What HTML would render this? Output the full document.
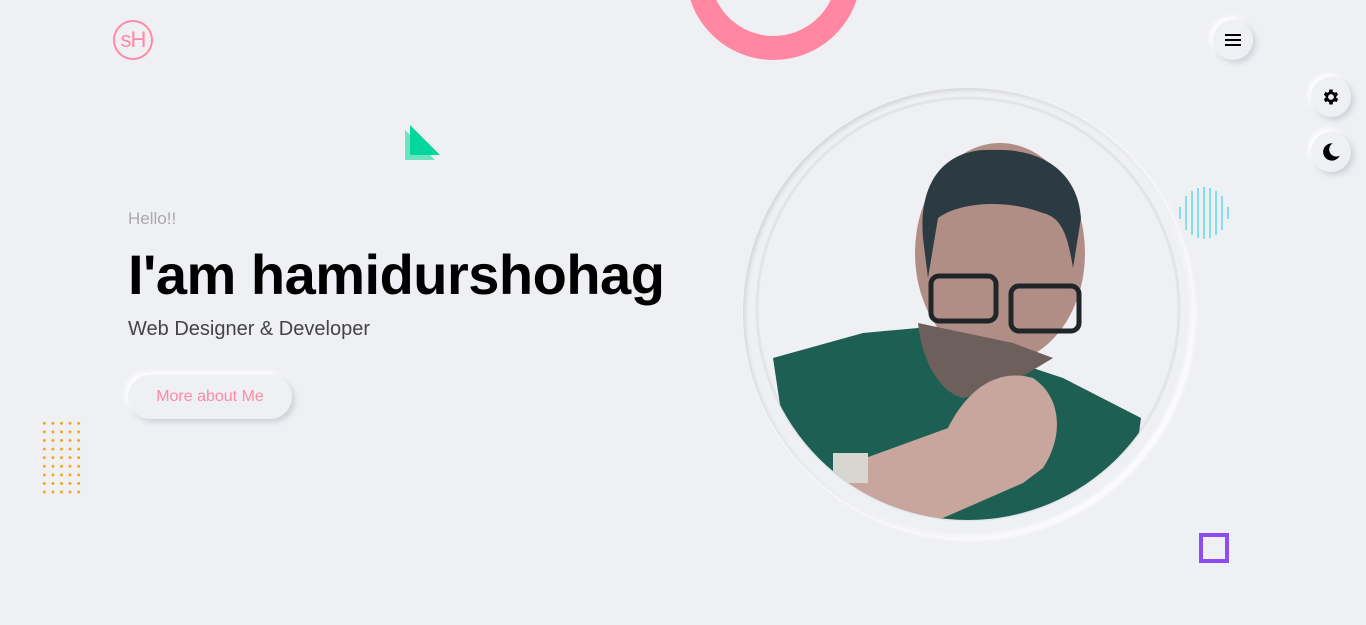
<!DOCTYPE html>
<html><head><meta charset="utf-8"><style>
*{margin:0;padding:0;box-sizing:border-box}
body{width:1366px;height:625px;overflow:hidden;background:#eff0f4;font-family:"Liberation Sans",sans-serif;position:relative}
.abs{position:absolute}
.logo{left:113px;top:20px;width:40px;height:40px;border:2px solid #ff8aa5;border-radius:50%;color:#ff8aa5;font-size:22px;text-align:center;line-height:36px;letter-spacing:-1px}
.btn{border-radius:50%;background:#eff0f4;box-shadow:3px 3px 6px #d0d2d8,-3px -3px 6px #fff;width:40px;height:40px;display:flex;align-items:center;justify-content:center}
.hello{left:128px;top:209px;color:#aaa;font-size:17px}
h1{left:128px;top:242px;font-size:56px;font-weight:bold;color:#000;letter-spacing:-0.5px}
.sub{left:128px;top:318px;font-size:20px;color:#444}
.more{left:128px;top:375px;width:164px;height:44px;border-radius:22px;background:#eff0f4;box-shadow:3px 3px 6px #cfd1d7,-3px -3px 6px #fff;color:#ff8aa5;font-size:16px;text-align:center;line-height:44px}
</style></head><body>
<div class="abs logo">sH</div>
<div class="abs" style="left:686px;top:-115px;width:175px;height:175px;border:24px solid #ff87a1;border-radius:50%"></div>
<svg class="abs" style="left:405px;top:125px" width="36" height="36"><polygon points="0,5 0,35 30,35" fill="#6de3bf"/><polygon points="5,0 5,30 35,30" fill="#05d69b"/></svg>
<div class="abs btn" style="left:1213px;top:20px"><svg width="18" height="16"><rect x="1" y="2" width="16" height="2" fill="#000"/><rect x="1" y="7" width="16" height="2" fill="#000"/><rect x="1" y="12" width="16" height="2" fill="#000"/></svg></div>
<div class="abs btn" style="left:1311px;top:77px"><svg width="20" height="20" viewBox="0 0 24 24"><path fill="#000" fill-rule="evenodd" d="M19.4 13a7.5 7.5 0 000-2l2.1-1.6-2-3.5-2.5 1a7.6 7.6 0 00-1.7-1L15 3h-4l-.4 2.9a7.6 7.6 0 00-1.7 1l-2.5-1-2 3.5L6.5 11a7.5 7.5 0 000 2l-2.1 1.6 2 3.5 2.5-1a7.6 7.6 0 001.7 1L11 21h4l.4-2.9a7.6 7.6 0 001.7-1l2.5 1 2-3.5zM13 15.5a3.5 3.5 0 110-7 3.5 3.5 0 010 7z" transform="translate(-1 0)"/></svg></div>
<div class="abs btn" style="left:1311px;top:132px"><svg width="22" height="22" viewBox="0 0 24 24"><path fill="#000" d="M14 2.5A9.5 9.5 0 1021.5 16 7.5 7.5 0 0114 2.5z"/></svg></div>
<svg class="abs" style="left:1178px;top:187px" width="54" height="52"><g stroke="#3cd2e6" stroke-width="1.2">
<line x1="2" y1="20" x2="2" y2="32"/><line x1="8" y1="9" x2="8" y2="43"/><line x1="14" y1="4" x2="14" y2="48"/><line x1="20" y1="1" x2="20" y2="51"/><line x1="26" y1="0" x2="26" y2="52"/><line x1="32" y1="1" x2="32" y2="51"/><line x1="38" y1="4" x2="38" y2="48"/><line x1="44" y1="9" x2="44" y2="43"/><line x1="50" y1="20" x2="50" y2="32"/></g></svg>
<div class="abs" style="left:42px;top:421px;width:40px;height:74px;background-image:radial-gradient(circle,#f7a21b 1.3px,transparent 1.7px);background-size:8.6px 8.6px;background-position:-2px -2px"></div>
<div class="abs" style="left:1199px;top:533px;width:30px;height:30px;border:4px solid #8d4cf6"></div>
<div class="abs hello">Hello!!</div>
<h1 class="abs">I'am hamidurshohag</h1>
<div class="abs sub">Web Designer &amp; Developer</div>
<div class="abs more">More about Me</div>
<div class="abs" style="left:743px;top:88px;width:450px;height:450px;border-radius:50%;box-shadow:inset 2px 2px 4px #d2d3d8,inset -2px -2px 4px #fff,2px 2px 5px #fff"></div>
<svg class="abs" style="left:743px;top:88px" width="450" height="450">
<defs><clipPath id="c"><circle cx="225" cy="221" r="211"/></clipPath></defs>
<circle cx="225" cy="221" r="211" fill="#eef0f4" stroke="#e3e4e8" stroke-width="3"/>
<g clip-path="url(#c)">
<path d="M30 270 L120 245 L175 240 L260 270 L320 290 L398 330 L380 470 L60 470 Z" fill="#1e5f54"/>
<ellipse cx="257" cy="165" rx="85" ry="110" fill="#b08e86"/>
<path d="M180 150 C175 90 205 60 250 62 C300 60 335 85 338 130 L330 180 C325 150 320 130 300 125 C260 110 215 115 195 130 L185 190 Z" fill="#2b3b41"/>
<path d="M175 235 C180 280 200 305 220 310 L260 300 L310 270 L270 255 Z" fill="#6c5f5c"/>
<rect x="188" y="188" width="65" height="45" rx="8" fill="none" stroke="#1f2528" stroke-width="5"/>
<rect x="268" y="198" width="68" height="45" rx="8" fill="none" stroke="#1f2528" stroke-width="5"/>
<path d="M95 380 L205 340 C225 300 255 280 290 290 C320 310 320 350 300 380 L280 395 L200 430 L120 440 Z" fill="#c8a69d"/>
<rect x="90" y="365" width="35" height="30" fill="#d8d6d0"/>
</g></svg>
</body></html>
